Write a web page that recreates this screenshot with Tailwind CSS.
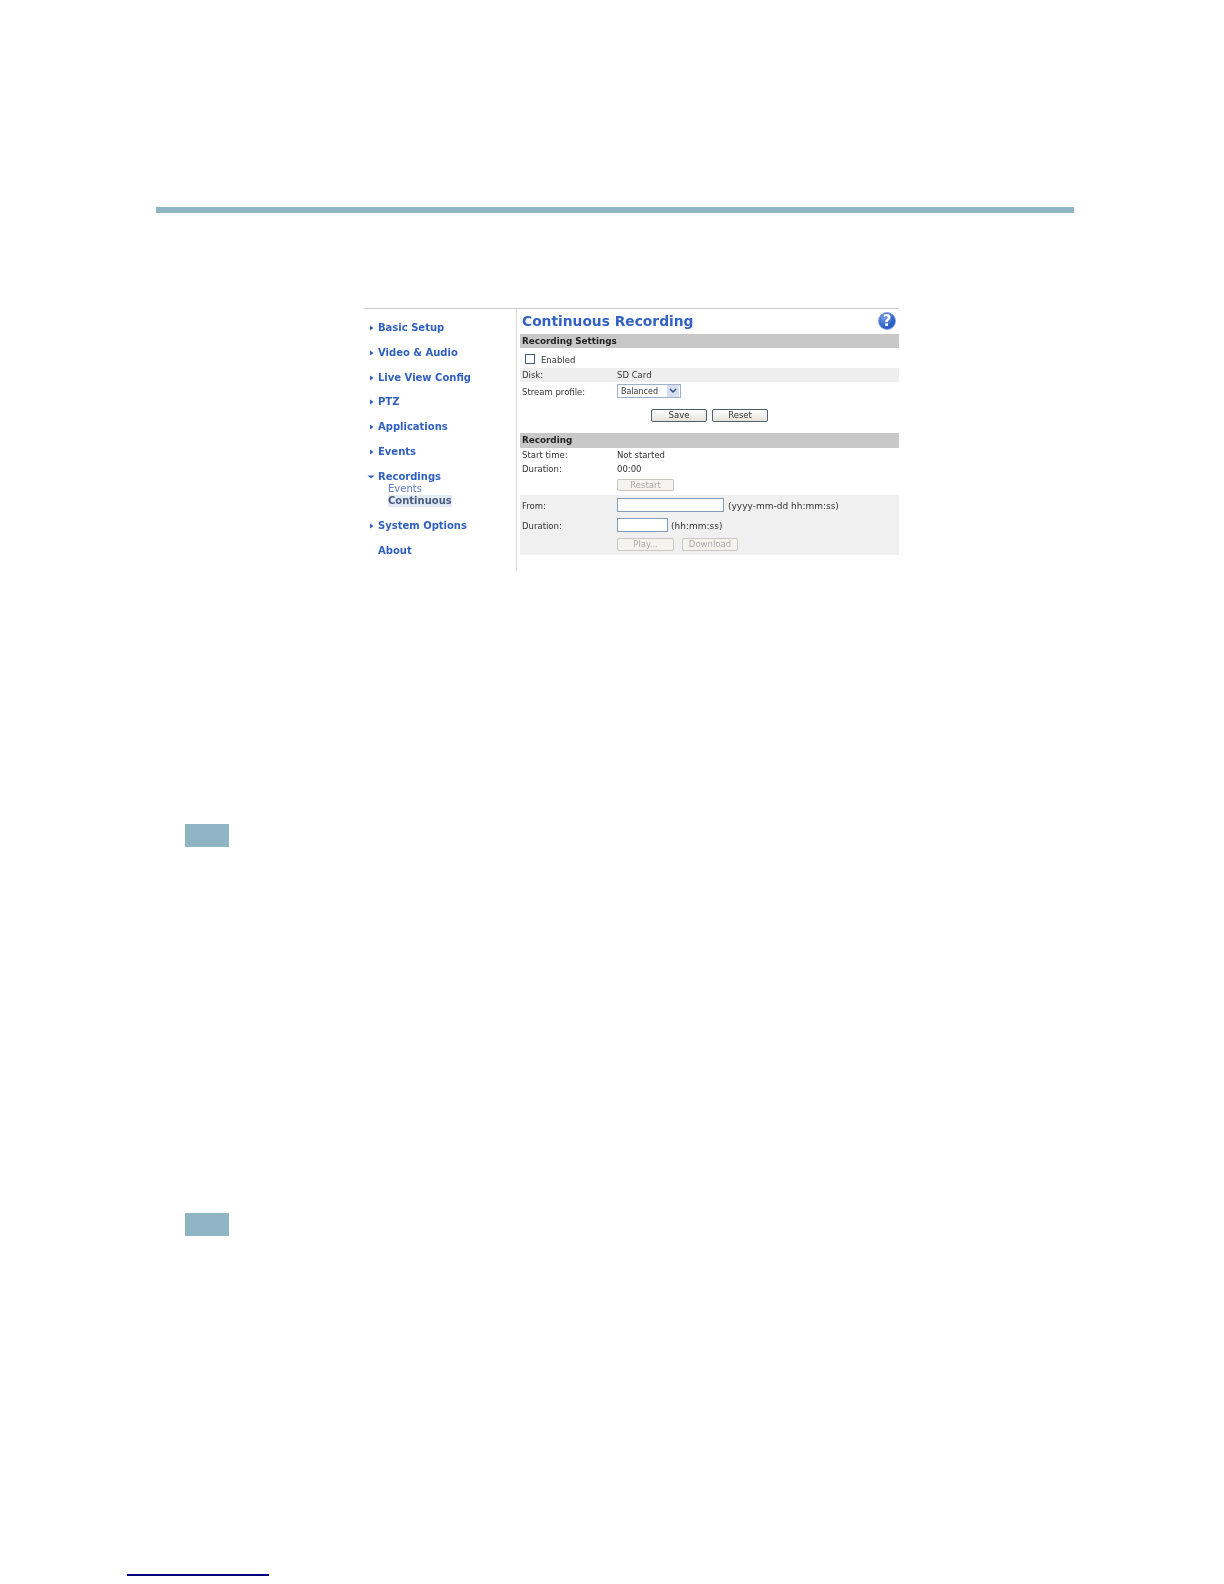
<!DOCTYPE html>
<html lang="en">
<head>
  <meta charset="UTF-8">
  <title>Continuous Recording</title>
  <script src="https://cdn.jsdelivr.net/npm/@tailwindcss/browser@4"></script>
</head>
<body class="bg-white font-['DejaVu_Sans',sans-serif]">
<div class="w-[1224px] h-[1584px] overflow-hidden flex flex-col">

  <!-- page header bar -->
  <div class="mt-[207px] ml-[156px] w-[918px] h-[6px] bg-[#8fb5c4]"></div>

  <!-- camera web page -->
  <div class="mt-[95px] ml-[364px] w-[535px] h-[263px] border-t border-[#c8c8c8] flex text-[8.5px] text-[#333] blur-[0.35px]">

    <nav class="w-[153px] h-full border-r border-[#d8d8d8] pt-[13px] flex flex-col gap-[12.75px] text-[10px] leading-[12px] font-bold text-[#2f5fbf]">
      <a class="flex items-center"><svg class="w-[14px] h-[12px]" viewBox="0 0 14 12"><path d="M6 3.500l3.500 2.500-3.500 2.500z" fill="#2f5fbf"/></svg>Basic Setup</a>
      <a class="flex items-center"><svg class="w-[14px] h-[12px]" viewBox="0 0 14 12"><path d="M6 3.500l3.500 2.500-3.500 2.500z" fill="#2f5fbf"/></svg>Video &amp; Audio</a>
      <a class="flex items-center"><svg class="w-[14px] h-[12px]" viewBox="0 0 14 12"><path d="M6 3.500l3.500 2.500-3.500 2.500z" fill="#2f5fbf"/></svg>Live View Config</a>
      <a class="flex items-center"><svg class="w-[14px] h-[12px]" viewBox="0 0 14 12"><path d="M6 3.500l3.500 2.500-3.500 2.500z" fill="#2f5fbf"/></svg>PTZ</a>
      <a class="flex items-center"><svg class="w-[14px] h-[12px]" viewBox="0 0 14 12"><path d="M6 3.500l3.500 2.500-3.500 2.500z" fill="#2f5fbf"/></svg>Applications</a>
      <a class="flex items-center"><svg class="w-[14px] h-[12px]" viewBox="0 0 14 12"><path d="M6 3.500l3.500 2.500-3.500 2.500z" fill="#2f5fbf"/></svg>Events</a>
      <div class="flex flex-col">
        <a class="flex items-center"><svg class="w-[14px] h-[12px]" viewBox="0 0 14 12"><path d="M3.500 4.500h7l-3.500 3z" fill="#2f5fbf"/></svg>Recordings</a>
        <a class="ml-[24px] font-normal text-[#5a7fc8]">Events</a>
        <a class="ml-[24px] w-fit text-[#4a5a80] bg-[#e2eaf5]">Continuous</a>
      </div>
      <a class="flex items-center mt-px"><svg class="w-[14px] h-[12px]" viewBox="0 0 14 12"><path d="M6 3.500l3.500 2.500-3.500 2.500z" fill="#2f5fbf"/></svg>System Options</a>
      <a class="ml-[14px]">About</a>
    </nav>

    <main class="flex-1 pl-[3px] flex flex-col">
      <div class="h-[25px] flex items-center justify-between pl-[2px] pr-[3px]">
        <h1 class="text-[13.8px] font-bold text-[#3263c4]">Continuous Recording</h1>
        <div class="w-[18px] h-[18px] -mt-[1px] rounded-full bg-[radial-gradient(circle_at_35%_30%,#6f9fe8,#2a5cc0_65%)] border border-[#7fa2e0] flex items-center justify-center text-white text-[15px] font-bold leading-none">?</div>
      </div>

      <div class="h-[14px] bg-[#c8c8c8] pl-[2px] pt-[2px] flex items-center text-[8.8px] font-bold text-[#222]">Recording Settings</div>
      <div class="h-[20px] pl-[5px] flex items-center gap-[6px]">
        <span class="w-[10px] h-[10px] mt-[1px] border border-[#3c5f80] bg-white"></span>
        <span class="mt-[5px]">Enabled</span>
      </div>
      <div class="h-[14px] bg-[#eeeeee] pl-[2px] flex items-center">
        <span class="w-[95px]">Disk:</span><span>SD Card</span>
      </div>
      <div class="h-[18px] pl-[2px] flex items-center">
        <span class="w-[95px] mt-[2px]">Stream profile:</span>
        <div class="w-[64px] h-[14px] border border-[#a0b0c8] flex items-center justify-between pl-[3px] pr-px text-[8px]">
          <span class="mt-[1px]">Balanced</span>
          <span class="w-[12px] h-[12px] bg-[#d4dff2] flex items-center justify-center">
            <svg class="w-[8px] h-[6px]" viewBox="0 0 8 6"><path d="M1 1l3 3 3-3" fill="none" stroke="#33517f" stroke-width="1.500"/></svg>
          </span>
        </div>
      </div>
      <div class="h-[33px] pt-[9px] pl-[131px] flex items-start gap-[5px]">
        <button class="w-[56px] h-[13px] rounded-[2px] border border-[#4d6070] bg-gradient-to-b from-white to-[#e6e2d8] flex items-center justify-center">Save</button>
        <button class="w-[56px] h-[13px] rounded-[2px] border border-[#4d6070] bg-gradient-to-b from-white to-[#e6e2d8] flex items-center justify-center">Reset</button>
      </div>

      <div class="h-[15px] bg-[#c8c8c8] pl-[2px] flex items-center text-[8.8px] font-bold text-[#222]">Recording</div>
      <div class="h-[14px] pl-[2px] flex items-center">
        <span class="w-[95px]">Start time:</span><span>Not started</span>
      </div>
      <div class="h-[14px] pl-[2px] flex items-center">
        <span class="w-[95px]">Duration:</span><span>00:00</span>
      </div>
      <div class="h-[19px] pt-[3px] pl-[97px]">
        <button class="w-[57px] h-[12px] rounded-[2px] border border-[#c8c8c0] bg-[#f4f3ee] text-[#aaa] flex items-center justify-center">Restart</button>
      </div>

      <div class="h-[60px] bg-[#f0f0f0] pl-[2px] pt-[3px] flex flex-col">
        <div class="h-[14px] flex items-center">
          <span class="w-[95px] mt-[3px]">From:</span>
          <span class="w-[107px] h-[14px] border border-[#7f9db9] bg-white"></span>
          <span class="ml-[4px] mt-[3px] text-[9px]">(yyyy-mm-dd hh:mm:ss)</span>
        </div>
        <div class="h-[14px] mt-[6px] flex items-center">
          <span class="w-[95px] mt-[3px]">Duration:</span>
          <span class="w-[51px] h-[14px] border border-[#7f9db9] bg-white"></span>
          <span class="ml-[3px] mt-[3px] text-[9px]">(hh:mm:ss)</span>
        </div>
        <div class="mt-[6px] pl-[95px] flex gap-[8px]">
          <button class="w-[57px] h-[13px] rounded-[2px] border border-[#c8c8c0] bg-[#f4f3ee] text-[#aaa] flex items-center justify-center">Play...</button>
          <button class="w-[56px] h-[13px] rounded-[2px] border border-[#c8c8c0] bg-[#f4f3ee] text-[#aaa] flex items-center justify-center">Download</button>
        </div>
      </div>
    </main>
  </div>

  <!-- note labels -->
  <div class="mt-[253px] ml-[185px] w-[44px] h-[23px] bg-[#8fb5c4]"></div>
  <div class="mt-[366px] ml-[185px] w-[44px] h-[23px] bg-[#8fb5c4]"></div>

  <!-- footer link underline -->
  <div class="mt-[338px] ml-[127px] w-[142px] h-[2px] bg-[#000080]"></div>
</div>
</body>
</html>
